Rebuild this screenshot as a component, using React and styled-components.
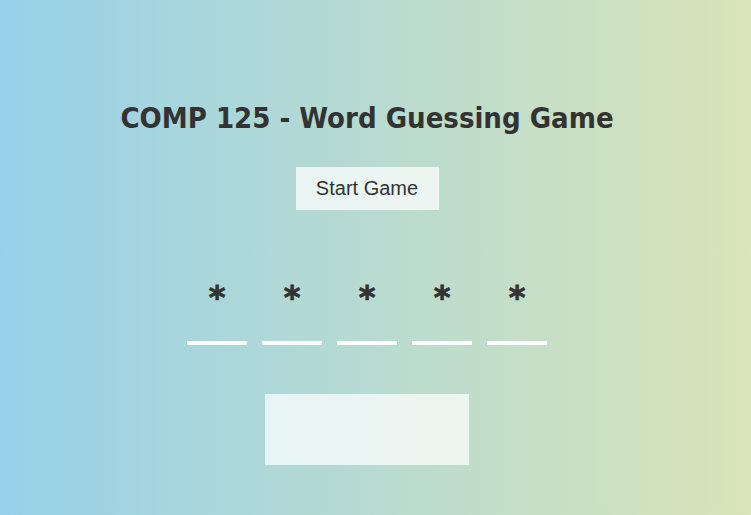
import styled, { createGlobalStyle } from 'styled-components';

const GlobalStyle = createGlobalStyle`
  html, body {
    margin: 0;
    height: 100%;
  }
  body {
    background: linear-gradient(to right, #97d1e9, #d9e4b8);
    font-family: "Liberation Sans", Arial, sans-serif;
    color: #333;
  }
`;

const Page = styled.main`
  width: 734px;
  height: 515px;
  display: flex;
  flex-direction: column;
  align-items: center;
`;

const Title = styled.h1`
  margin: 99px 0 0;
  font-family: "DejaVu Sans Condensed", "DejaVu Sans", sans-serif;
  font-stretch: condensed;
  font-size: 29px;
  font-weight: bold;
  line-height: 38px;
  color: #333;
`;

const StartButton = styled.button`
  margin-top: 30px;
  width: 143px;
  height: 43px;
  border: none;
  background: rgba(255, 255, 255, 0.72);
  font-family: "Liberation Sans", Arial, sans-serif;
  font-size: 20px;
  color: #333;
`;

const Letters = styled.div`
  margin-top: 66px;
  display: flex;
  gap: 15px;
`;

const Letter = styled.div`
  width: 60px;
  height: 69px;
  box-sizing: border-box;
  border-bottom: 4px solid #fff;
  display: flex;
  justify-content: center;
  font-family: "DejaVu Sans", sans-serif;
  font-weight: bold;
  font-size: 32px;
  line-height: 42px;
  -webkit-text-stroke: 0.8px #333;
  color: #333;
`;

const GuessBox = styled.div`
  margin-top: 49px;
  width: 204px;
  height: 71px;
  background: rgba(255, 255, 255, 0.72);
`;

export default function App() {
  const word = ['*', '*', '*', '*', '*'];
  return (
    <>
      <GlobalStyle />
      <Page>
        <Title>COMP 125 - Word Guessing Game</Title>
        <StartButton>Start Game</StartButton>
        <Letters>
          {word.map((c, i) => (
            <Letter key={i}>{c}</Letter>
          ))}
        </Letters>
        <GuessBox />
      </Page>
    </>
  );
}
